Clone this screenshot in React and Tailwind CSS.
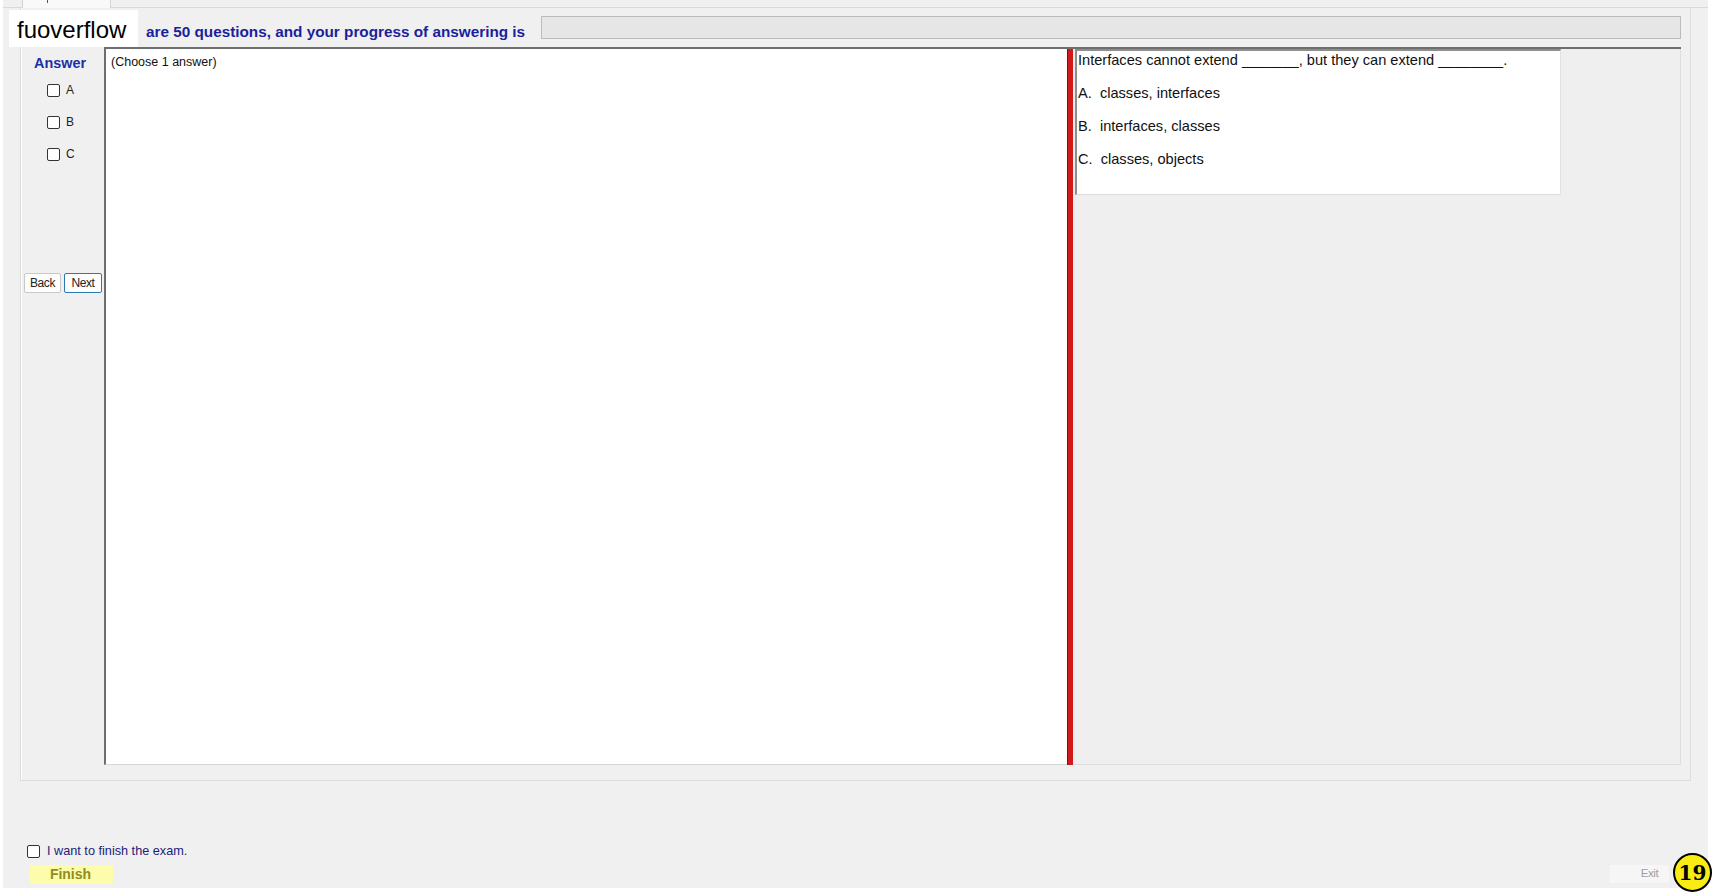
import React from "react";

function Box({ className = "" }) {
  return (
    <span
      className={
        "inline-block w-[13px] h-[13px] bg-white border border-[#333333] rounded-[2px] " +
        className
      }
    />
  );
}

export default function App() {
  return (
    <div className="relative w-[1713px] h-[893px] bg-white overflow-hidden font-['Liberation_Sans',Arial,sans-serif]">
      <div className="ml-[3px] w-[1705px] h-[888px] bg-[#f0f0f0] flex flex-col">
        {/* cut-off tab strip */}
        <div className="h-[8px] flex border-b border-[#d9d9d9]">
          <div className="ml-[19px] w-[89px] h-[8px] bg-[#f9f9f9] border-x border-[#d4d4d4] relative">
            <span className="absolute left-[24px] top-0 w-[1px] h-[3px] bg-[#555]" />
          </div>
        </div>

        {/* group box */}
        <div className="ml-[17px] w-[1671px] h-[773px] border-x border-b border-[#dcdcdc] shadow-[inset_1px_0_0_#ffffff] flex flex-col">
          {/* header row */}
          <div className="h-[39px] flex items-start">
            <span className="ml-[125px] w-[395px] mt-[15px] leading-[18px] text-[15.3px] font-bold text-[#1b1f9c] whitespace-nowrap">
              are 50 questions, and your progress of answering is
            </span>
            <div className="mt-[8px] w-[1140px] h-[23px] bg-[#e6e6e6] border border-[#bcbcbc]" />
          </div>

          {/* main row */}
          <div className="h-[718px] flex">
            {/* answer column */}
            <div className="ml-[1px] w-[82px] flex flex-col">
              <div className="pt-[7px] h-[25px] leading-[18px] text-center pr-[6px] text-[14.4px] font-bold text-[#1b2fa6]">
                Answer
              </div>
              {["A", "B", "C"].map((l, i) => (
                <div
                  key={l}
                  className={
                    "h-[16px] flex items-center pl-[25px] " +
                    (i === 0 ? "mt-[10px]" : i === 1 ? "mt-[16px]" : "mt-[16px]")
                  }
                >
                  <Box />
                  <span className="ml-[6px] text-[12px] text-[#222]">{l}</span>
                </div>
              ))}
              <div className="mt-[111px] ml-[2px] flex gap-[3px]">
                <button className="w-[37px] h-[20px] bg-[#fdfdfd] border border-[#c8c8c8] rounded-[2px] text-[12px] text-[#222] tracking-[-0.4px] flex items-center justify-center">
                  Back
                </button>
                <button className="w-[38px] h-[20px] bg-[#fdfdfd] border border-[#2a7ab0] rounded-[2px] text-[12px] text-[#222] tracking-[-0.4px] flex items-center justify-center">
                  Next
                </button>
              </div>
            </div>

            {/* content */}
            <div className="w-[1577px] flex border-t-2 border-[#6e6e6e]">
              <div className="w-[963px] bg-white border-l-2 border-[#6e6e6e] border-b border-b-[#d6d6d6] pl-[5px] pt-[6px]">
                <div className="text-[12.5px] leading-[15px] text-[#111]">(Choose 1 answer)</div>
              </div>
              <div className="w-[6px] bg-[#d21a1d] border-l border-[#7a1010]" />
              <div className="flex-1 bg-[#efefef] border-r border-b border-[#dedede] pl-[2px]">
                <div className="w-[486px] h-[146px] bg-white border-l-2 border-t-2 border-[#8e8e8e] border-r border-r-[#e2e2e2] border-b border-b-[#dddddd] pl-[1px] pt-[1px] flex flex-col gap-[16px] text-[14.6px] leading-[17px] text-[#111]">
                  <div>Interfaces cannot extend _______, but they can extend ________.</div>
                  <div>A.&nbsp; classes, interfaces</div>
                  <div>B.&nbsp; interfaces, classes</div>
                  <div>C.&nbsp; classes, objects</div>
                </div>
              </div>
            </div>
          </div>
        </div>

        {/* footer */}
        <div className="flex-1 flex flex-col">
          <div className="mt-[64px] ml-[24px] h-[13px] flex items-center">
            <Box />
            <span className="ml-[7px] text-[12.7px] text-[#1c1c7c]">
              I want to finish the exam.
            </span>
          </div>
          <div className="mt-[7px] flex justify-between items-start">
            <div className="ml-[27px] w-[83px] h-[19px] bg-[#fcfcaa] flex items-center justify-center pr-[2px] text-[14px] font-bold text-[#8e8e22]">
              Finish
            </div>
            <div className="mr-[38px] -mt-[1px] w-[61px] h-[20px] bg-[#f6f6f6] border border-[#f0f0f0] flex items-center justify-center pl-[20px] text-[11.5px] tracking-[-0.4px] text-[#a0a0a0]">
              Exit
            </div>
          </div>
        </div>
      </div>

      {/* fuoverflow watermark */}
      <div className="absolute left-[9px] top-[10px] w-[129px] h-[37px] bg-white flex items-center pl-[8px] pt-[2px] text-[24px] leading-none text-black">
        fuoverflow
      </div>

      {/* badge */}
      <div className="absolute left-[1673px] top-[853px] w-[39px] h-[39px] rounded-full bg-[#f8ec14] border-2 border-black flex items-center justify-center font-['DejaVu_Serif',serif] font-bold text-[20px] leading-none text-black">
        19
      </div>
    </div>
  );
}
